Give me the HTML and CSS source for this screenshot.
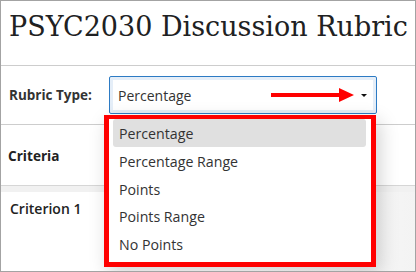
FILE: index.html
```html
<!DOCTYPE html>
<html>
<head>
<meta charset="utf-8">
<link rel="stylesheet" href="styles.css">
</head>
<body>
<div class="frame">
  <h1 class="title">PSYC2030 Discussion Rubric</h1>
  <div class="type-row">
    <span class="label">Rubric Type:</span>
    <div class="select-wrap">
      <div class="select">
        <span class="value">Percentage</span>
        <span class="arrow"><span class="shaft"></span><span class="head"></span></span>
        <span class="caret"></span>
      </div>
      <ul class="menu">
        <li class="item active">Percentage</li>
        <li class="item">Percentage Range</li>
        <li class="item">Points</li>
        <li class="item">Points Range</li>
        <li class="item">No Points</li>
      </ul>
    </div>
  </div>
  <div class="head-row"><span class="th">Criteria</span></div>
  <div class="band"></div>
  <div class="crit-row"><span class="crit">Criterion 1</span></div>
</div>
</body>
</html>
```

FILE: styles.css
```css
* { box-sizing: border-box; }
html, body { margin: 0; padding: 0; background: #fff; }
.frame {
  position: relative;
  width: 416px;
  height: 272px;
  border: 1px solid #a3a3a3;
  overflow: hidden;
  font-family: "Open Sans", "Liberation Sans", sans-serif;
  color: #333;
}
.title {
  margin: 0;
  height: 65px;
  padding: 6px 0 0 8px;
  font-family: "DejaVu Serif", "Liberation Serif", serif;
  font-weight: normal;
  font-size: 27px;
  line-height: 40px;
  color: #202122;
  white-space: nowrap;
  border-bottom: 1px solid #cdcdcd;
}
.type-row {
  display: flex;
  align-items: center;
  height: 59px;
  padding-left: 8px;
  border-bottom: 1px solid #cdcdcd;
}
.label {
  width: 100px;
  font-weight: 700;
  font-size: 13.5px;
  color: #333;
}
.select-wrap { position: relative; }
.select {
  display: flex;
  align-items: center;
  width: 268px;
  height: 38px;
  border: 1px solid #2d7bc4;
  border-radius: 2px;
  box-shadow: inset 0 0 0 3px #e5eef8;
  padding-left: 8px;
  font-size: 14px;
  color: #333;
}
.value { flex: 1; }
.arrow {
  display: flex;
  align-items: center;
  margin-right: 7px;
}
.shaft {
  width: 68px;
  height: 4px;
  background: #f00;
}
.head {
  width: 0;
  height: 0;
  border-top: 7px solid transparent;
  border-bottom: 7px solid transparent;
  border-left: 15px solid #f00;
}
.caret {
  width: 0;
  height: 0;
  border-left: 3px solid transparent;
  border-right: 3px solid transparent;
  border-top: 3.5px solid #111;
  margin-right: 9px;
}
.menu {
  position: absolute;
  left: -5px;
  top: 39px;
  width: 272px;
  height: 152px;
  margin: 0;
  padding: 0 5px 0 4px;
  list-style: none;
  background: #fff;
  border: 5px solid #f00;
  border-top-width: 4px;
  box-shadow: 4px 6px 18px rgba(0,0,0,0.18);
  z-index: 2;
}
.item {
  height: 27.8px;
  padding: 3px 0 0 6px;
  line-height: 24.8px;
  font-size: 14.2px;
  color: #333;
  border-radius: 3px;
  white-space: nowrap;
}
.item.active { background: #e0e0e0; }
.head-row {
  display: flex;
  align-items: center;
  height: 61px;
  padding-left: 7px;
  border-bottom: 1px solid #d6d6d6;
}
.th { font-weight: 700; font-size: 13.6px; color: #222; }
.band { height: 6px; background: #f1f1f1; }
.crit-row {
  height: 80px;
  padding: 5px 0 0 9px;
  background: linear-gradient(to right, #fff 60%, #f3f3f3);
}
.crit { font-weight: 600; font-size: 14px; color: #222; }
```
